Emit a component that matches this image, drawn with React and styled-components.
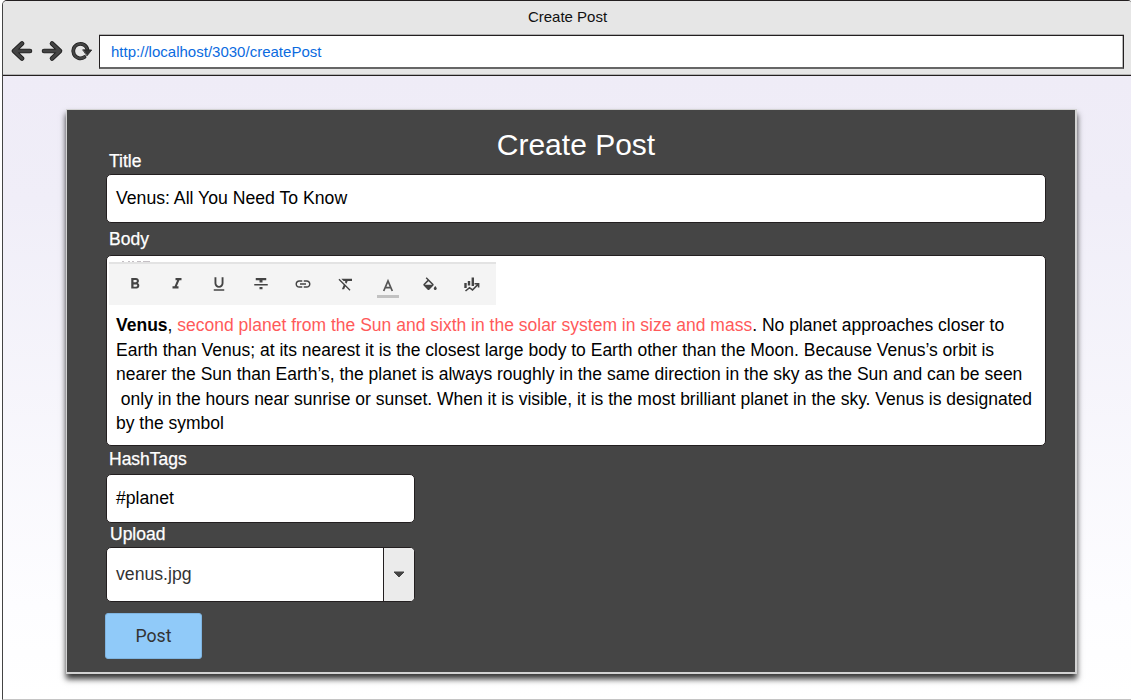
import React from 'react';
import styled, { createGlobalStyle } from 'styled-components';
import {
  MdFormatBold, MdFormatItalic, MdFormatUnderlined,
  MdLink, MdFormatClear,
} from 'react-icons/md';

const Global = createGlobalStyle`
  * { box-sizing: border-box; }
  body { margin: 0; background: #fff; font-family: "Liberation Sans", Arial, sans-serif; overflow: hidden; }
`;

const Page = styled.div`
  width: 1131px;
  height: 700px;
  padding-left: 2px;
`;

const Browser = styled.div`
  height: 700px;
  display: flex;
  flex-direction: column;
  border-left: 1px solid #444;
  border-top: 1px solid #231f20;
  border-bottom: 1px solid #c4c4c4;
  border-top-left-radius: 5px;
  border-top-right-radius: 3px;
  overflow: hidden;
`;

const Chrome = styled.header`
  flex: none;
  height: 75px;
  background: #e6e6e6;
  border-bottom: 1px solid #231f20;
  box-shadow: inset 0 -1px 0 #b4b4b4;
`;

const WindowTitle = styled.div`
  height: 33px;
  padding: 7px 0 0 1px;
  font-size: 15px;
  line-height: 17px;
  text-align: center;
  color: #111;
`;

const NavBar = styled.div`
  display: flex;
  padding: 0 7px 0 8px;
`;

const NavIcons = styled.svg`
  flex: none;
  width: 88px;
  height: 34px;
`;

const Address = styled.div`
  flex: 1;
  height: 34px;
  margin-top: 1px;
  padding-left: 11px;
  background: #fff;
  border: 1px solid #231f20;
  border-bottom: 2px solid #666;
  box-shadow: 0 -1px 0 #b0b0b0, inset -1px 0 0 #b8b8b8;
  font-size: 15px;
  line-height: 31px;
  letter-spacing: 0.01px;
  color: #0b6be0;
`;

const Viewport = styled.main`
  flex: 1;
  padding: 33px 0 0 63px;
  background: linear-gradient(#efecf7 0%, #f0eef8 20%, #fdfdff 85%, #fff 100%);
`;

const Card = styled.section`
  width: 1011px;
  height: 565px;
  display: flex;
  flex-direction: column;
  align-items: flex-start;
  padding-left: 39px;
  background: #454545;
  border: 1px solid #d2d2d2;
  border-bottom-width: 2px;
  border-right-width: 2px;
  box-shadow: 0 5px 6px rgba(0, 0, 0, 0.8);
`;

const Heading = styled.h1`
  align-self: stretch;
  height: 40px;
  margin: 0 0 0 -39px;
  padding: 18px 0 0 10px;
  font-size: 30px;
  line-height: 34px;
  font-weight: 400;
  text-align: center;
  color: #fff;
`;

const Label = styled.label`
  height: ${(p) => p.$height}px;
  padding: ${(p) => p.$top || 1}px 0 0 ${(p) => p.$indent || 3}px;
  font-size: 17.5px;
  line-height: 20px;
  color: #fff;
  -webkit-text-stroke: 0.25px #fff;
`;

const Field = styled.div`
  flex: none;
  display: flex;
  align-items: center;
  width: ${(p) => p.$width}px;
  height: ${(p) => p.$height}px;
  padding-left: 9px;
  background: #fff;
  border: 1px solid #231f20;
  border-radius: 5px;
  font-size: 17.65px;
  color: ${(p) => p.$color || '#000'};
  overflow: hidden;
`;

const Arrow = styled.div`
  display: flex;
  align-items: center;
  justify-content: center;
  align-self: stretch;
  width: 31px;
  margin-left: auto;
  background: #ebebeb;
  border-left: 1px solid #231f20;
`;

const Editor = styled.div`
  flex: none;
  width: 940px;
  height: 191px;
  padding: 6px 0 0 2px;
  background: #fff;
  border: 1px solid #231f20;
  border-radius: 5px;
`;

const Toolbar = styled.div`
  display: flex;
  align-items: center;
  width: 387px;
  height: 43px;
  padding: 0 0 0 5px;
  background: #f4f4f4;
  border-top: 2px solid #e3e3e3;
`;

const Tool = styled.span`
  display: flex;
  justify-content: center;
  width: 42.1px;
  padding-bottom: 1px;
  color: #444;
`;

const ClippedMark = styled.svg`
  display: block;
  width: 30px;
  height: 2px;
  margin: -2px 0 0 12px;
`;

const Copy = styled.div`
  padding: 8px 0 0 7px;
  font-size: 17.515px;
  line-height: 24.5px;
  white-space: pre;
  color: #000;
`;

const Line = styled.div`
  height: 24.5px;
`;

const Accent = styled.span`
  color: #ff5a5a;
`;

const PostButton = styled.button`
  width: 97px;
  height: 46px;
  margin: 11px 0 0 -1px;
  padding: 0 0 1px;
  background: #90caf9;
  border: 1px solid #7fb4e0;
  border-radius: 3px;
  font: 400 17.7px Roboto, sans-serif;
  color: #333;
`;

export default function App() {
  return (
    <Page>
      <Global />
      <Browser>
        <Chrome>
          <WindowTitle>Create Post</WindowTitle>
          <NavBar>
            <NavIcons viewBox="11 34 88 34" fill="none" strokeLinecap="round" strokeLinejoin="round">
              <g stroke="#222" strokeWidth="4.6">
                <path d="M30 51H14M22 43.5L14 51L22 58.5" />
                <path d="M44 51H60M52 43.5L60 51L52 58.5" />
              </g>
              <g stroke="#444" strokeWidth="2.8">
                <path d="M30 51H14M22 43.5L14 51L22 58.5" />
                <path d="M44 51H60M52 43.5L60 51L52 58.5" />
              </g>
              <path d="M84.5 57A7.2 7.2 0 1 1 87.5 50" stroke="#222" strokeWidth="3.8" />
              <path d="M84.5 57A7.2 7.2 0 1 1 87.5 50" stroke="#444" strokeWidth="2.2" />
              <path d="M83 49.8L91.7 50L87.2 55.6Z" fill="#333" stroke="#222" strokeWidth="0.8" strokeLinejoin="miter" />
            </NavIcons>
            <Address>http://localhost/3030/createPost</Address>
          </NavBar>
        </Chrome>
        <Viewport>
          <Card>
            <Heading>Create Post</Heading>
            <Label $height={24}>Title</Label>
            <Field $width={940} $height={49}>Venus: All You Need To Know</Field>
            <Label $height={32} $top={6}>Body</Label>
            <Editor>
              <ClippedMark viewBox="0 0 30 2">
                <path d="M1 1.5H3M7 1.5H9M11 1.5H13M16 1.5H20M22 1.5H29" stroke="#c4bfc4" />
              </ClippedMark>
              <Toolbar>
                <Tool><MdFormatBold size={18} /></Tool>
                <Tool><MdFormatItalic size={18} /></Tool>
                <Tool><MdFormatUnderlined size={18} /></Tool>
                <Tool>
                  <svg width="18" height="18" viewBox="0 0 24 24" fill="currentColor">
                    <path d="M10 19h4v-3h-4v3zM5 4v3h5v3h4V7h5V4H5zM3 14h18v-2H3v2z" />
                  </svg>
                </Tool>
                <Tool><MdLink size={18} /></Tool>
                <Tool><MdFormatClear size={18} /></Tool>
                <Tool>
                  <svg width="22" height="28" viewBox="0 0 22 28">
                    <path d="M6.7 21L11 11L15.3 21M8.2 17.7H13.8" fill="none" stroke="#555" strokeWidth="1.7" />
                    <path d="M0 25H22V28H0Z" fill="#c2c2c2" />
                  </svg>
                </Tool>
                <Tool>
                  <svg width="18" height="18" viewBox="0 -3 24 24" fill="currentColor">
                    <path d="M16.56 8.94L7.62 0 6.21 1.41l2.38 2.38-5.15 5.15c-.59.59-.59 1.54 0 2.12l5.5 5.5c.29.29.68.44 1.06.44s.77-.15 1.06-.44l5.5-5.5c.59-.58.59-1.53 0-2.12zM5.21 10L10 5.21 14.79 10H5.21zM19 11.5s-2 2.17-2 3.5c0 1.1.9 2 2 2s2-.9 2-2c0-1.33-2-3.5-2-3.5z" />
                  </svg>
                </Tool>
                <Tool>
                  <svg width="17" height="17" viewBox="0 0 17 17" fill="none" stroke="#444">
                    <path d="M2.5 7V12M6 5V9.5M9.8 1.5V10" strokeWidth="2.4" />
                    <path d="M2.5 15L6.5 11.7L9.5 14L15 8.4M11.5 7.8H15.6V11.5" strokeWidth="1.6" />
                  </svg>
                </Tool>
              </Toolbar>
              <Copy>
                <Line><b>Venus</b>, <Accent>second planet from the Sun and sixth in the solar system in size and mass</Accent>. No planet approaches closer to</Line>
                <Line>Earth than Venus; at its nearest it is the closest large body to Earth other than the Moon. Because Venus’s orbit is</Line>
                <Line>nearer the Sun than Earth’s, the planet is always roughly in the same direction in the sky as the Sun and can be seen</Line>
                <Line> only in the hours near sunrise or sunset. When it is visible, it is the most brilliant planet in the sky. Venus is designated</Line>
                <Line>by the symbol</Line>
              </Copy>
            </Editor>
            <Label $height={28} $top={3}>HashTags</Label>
            <Field $width={309} $height={49}>#planet</Field>
            <Label $height={24} $indent={4}>Upload</Label>
            <Field $width={309} $height={55} $color="#333">
              venus.jpg
              <Arrow>
                <svg width="12" height="7" viewBox="0 0 12 7"><path d="M1 1H11L6 6Z" fill="#444" stroke="#444" strokeLinejoin="round" /></svg>
              </Arrow>
            </Field>
            <PostButton>Post</PostButton>
          </Card>
        </Viewport>
      </Browser>
    </Page>
  );
}
